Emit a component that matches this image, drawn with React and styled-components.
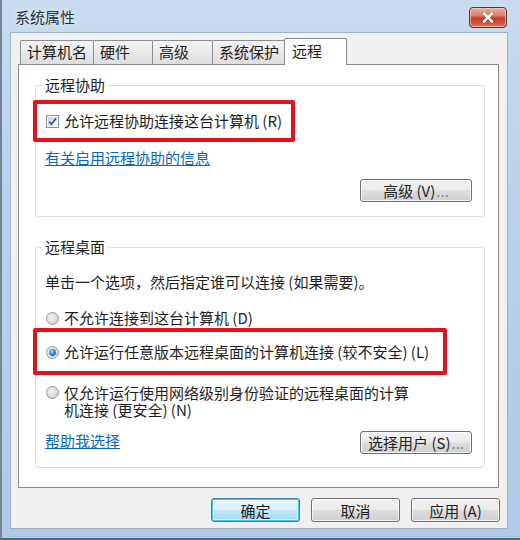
import React from 'react';
import styled, { createGlobalStyle, css } from 'styled-components';

const GlobalStyle = createGlobalStyle`
  html, body {
    margin: 0;
    padding: 0;
  }
  body {
    width: 520px;
    height: 540px;
    overflow: hidden;
    font-family: "Noto Sans CJK SC", "Noto Sans", sans-serif;
    color: #1e1e1e;
  }
`;

const Window = styled.div`
  width: 520px;
  height: 540px;
  box-sizing: border-box;
  display: flex;
  flex-direction: column;
  background: linear-gradient(to bottom, #c9dcef 0%, #bcd3ea 30%, #afc9e6 100%);
  border-left: 2px solid #75848f;
  border-bottom: 2px solid #3f6d7a;
  padding: 0 12px 9px 8px;
`;

const TitleBar = styled.div`
  height: 32px;
  flex-shrink: 0;
  display: flex;
  align-items: center;
  justify-content: space-between;
  padding-left: 5px;
`;

const Title = styled.span`
  font-size: 15px;
  line-height: 20px;
  color: #26323e;
  text-shadow: 0 0 6px rgba(255, 255, 255, 0.9);
  margin-top: 2px;
`;

const CloseButton = styled.div`
  width: 38px;
  height: 21px;
  box-sizing: border-box;
  margin: 3px 1px 0 0;
  border: 1px solid #6b2c24;
  border-radius: 4px;
  background: linear-gradient(to bottom, #eab2a2 0%, #d9806b 40%, #c43f27 52%, #d0533a 80%, #e07a5c 100%);
  box-shadow: inset 0 0 0 1px rgba(255, 220, 210, 0.6);
  display: flex;
  align-items: center;
  justify-content: center;
`;

const Client = styled.div`
  flex: 1;
  display: flex;
  flex-direction: column;
  background: #f0f0f0;
  border: 1px solid #9fb3c6;
  padding: 5px 8px 0 7px;
`;

const TabStrip = styled.div`
  height: 26px;
  display: flex;
  align-items: flex-end;
  padding-left: 2px;
  position: relative;
  z-index: 1;
`;

const Tab = styled.div`
  width: ${(p) => p.w}px;
  height: 24px;
  box-sizing: border-box;
  margin-right: -1px;
  padding-left: 6px;
  border: 1px solid #898c95;
  border-bottom: none;
  border-radius: 2px 2px 0 0;
  background: linear-gradient(to bottom, #f4f4f4 0%, #e9e9e9 50%, #dedede 100%);
  font-size: 15px;
  line-height: 22px;
  white-space: nowrap;

  ${(p) =>
    p.active &&
    css`
      height: 27px;
      margin-bottom: -1px;
      padding-left: 7px;
      background: #ffffff;
      line-height: 24px;
    `};
`;

const Panel = styled.div`
  display: flex;
  flex-direction: column;
  background: #ffffff;
  border: 1px solid #898c95;
  padding: 20px 13px 19px 16px;
`;

const GroupBox = styled.div`
  display: flex;
  flex-direction: column;
  border: 1px solid #d5dfe5;
  border-radius: 3px;
  padding: 0 12px ${(p) => p.bottom}px 9px;
  margin-top: ${(p) => p.top || 0}px;
`;

const Legend = styled.span`
  align-self: flex-start;
  margin: -11px 0 0 -3px;
  padding: 0 3px;
  background: #ffffff;
  font-size: 15px;
  line-height: 20px;
`;

const Highlight = styled.div`
  align-self: flex-start;
  margin: ${(p) => p.top || 0}px 0 0 -12px;
  padding: ${(p) => p.pad};
  border: 4px solid #e5121b;
  border-radius: 2px;
`;

const OptionRow = styled.div`
  display: flex;
  align-items: ${(p) => (p.wrap ? 'flex-start' : 'center')};
  gap: 5px;
  margin-top: ${(p) => p.top || 0}px;
`;

const Indicator = styled.svg`
  flex-shrink: 0;
  margin-left: 1px;
  margin-top: ${(p) => (p.wrap ? 2 : 0)}px;
`;

const Label = styled.span`
  font-size: 15px;
  line-height: ${(p) => (p.wrap ? 17 : 20)}px;
  max-width: ${(p) => (p.wrap ? '352px' : 'none')};
  white-space: ${(p) => (p.wrap ? 'normal' : 'nowrap')};
`;

const Text = styled.div`
  font-size: 15px;
  line-height: 20px;
  margin-top: ${(p) => p.top || 0}px;
`;

const Link = styled.a`
  align-self: flex-start;
  font-size: 15px;
  line-height: 20px;
  color: #0a66c2;
  text-decoration: underline;
  margin-top: ${(p) => p.top || 0}px;
`;

const Footer = styled.div`
  display: flex;
  align-items: center;
  justify-content: space-between;
  margin-top: 13px;
`;

const Button = styled.div`
  width: ${(p) => p.w}px;
  height: ${(p) => p.h}px;
  box-sizing: border-box;
  align-self: flex-end;
  margin-top: ${(p) => p.top || 0}px;
  border: 1px solid #707070;
  border-radius: 3px;
  background: linear-gradient(to bottom, #f3f3f3 0%, #ebebeb 48%, #dddddd 52%, #cfcfcf 100%);
  box-shadow: inset 0 0 0 1px rgba(255, 255, 255, 0.75);
  display: flex;
  align-items: center;
  justify-content: center;
  font-size: 15px;
  white-space: nowrap;

  ${(p) =>
    p.primary &&
    css`
      border-color: #3c7fb1;
      background: linear-gradient(to bottom, #eaf6fd 0%, #d9f0fc 48%, #bee6fd 52%, #a7d9f5 100%);
      box-shadow: inset 0 0 0 1px #48c1f0, inset 0 0 0 2px rgba(255, 255, 255, 0.6);
    `};
`;

const Dots = styled.span`
  color: #8a8a8a;
  margin-left: 1px;
`;

const ButtonRow = styled.div`
  display: flex;
  justify-content: flex-end;
  gap: 11px;
  margin: 10px -1px 0 0;
`;

function CheckBox() {
  return (
    <Indicator width="13" height="13" viewBox="0 0 13 13">
      <defs>
        <linearGradient id="cb" x1="0" y1="0" x2="1" y2="1">
          <stop offset="0" stopColor="#cbd4de" />
          <stop offset="1" stopColor="#f4f6f8" />
        </linearGradient>
      </defs>
      <rect x="0.5" y="0.5" width="12" height="12" fill="#ffffff" stroke="#8f8f8f" />
      <rect x="2" y="2" width="9" height="9" fill="url(#cb)" />
      <path d="M3.2 6.6 L5.4 9.2 L10 3.4" fill="none" stroke="#3a5a9c" strokeWidth="1.8" />
    </Indicator>
  );
}

function Radio({ checked, wrap }) {
  return (
    <Indicator width="13" height="13" viewBox="0 0 13 13" wrap={wrap ? 1 : 0}>
      <defs>
        <radialGradient id="rb" cx="0.4" cy="0.4" r="0.7">
          <stop offset="0" stopColor="#f4f4f4" />
          <stop offset="1" stopColor="#c9c9c9" />
        </radialGradient>
        <radialGradient id="rd" cx="0.4" cy="0.35" r="0.7">
          <stop offset="0" stopColor="#9fe2ff" />
          <stop offset="0.6" stopColor="#2b8bd0" />
          <stop offset="1" stopColor="#1a5c9b" />
        </radialGradient>
      </defs>
      <circle cx="6.5" cy="6.5" r="6" fill="url(#rb)" stroke="#9b9b9b" />
      {checked && <circle cx="6.5" cy="6.5" r="3.4" fill="url(#rd)" />}
    </Indicator>
  );
}

export default function App() {
  return (
    <>
      <GlobalStyle />
      <Window>
        <TitleBar>
          <Title>系统属性</Title>
          <CloseButton>
            <svg width="14" height="11" viewBox="0 0 14 11">
              <path d="M3 1.5 L11 9.5 M11 1.5 L3 9.5" stroke="#5a1b12" strokeWidth="4" strokeLinecap="round" opacity="0.35" />
              <path d="M3 1.5 L11 9.5 M11 1.5 L3 9.5" stroke="#ffffff" strokeWidth="2.6" strokeLinecap="round" />
            </svg>
          </CloseButton>
        </TitleBar>
        <Client>
          <TabStrip>
            <Tab w={74}>计算机名</Tab>
            <Tab w={60}>硬件</Tab>
            <Tab w={61}>高级</Tab>
            <Tab w={73}>系统保护</Tab>
            <Tab w={63} active>
              远程
            </Tab>
          </TabStrip>
          <Panel>
            <GroupBox bottom={14}>
              <Legend>远程协助</Legend>
              <Highlight top={5} pad="7px 9px 7px 8px">
                <OptionRow>
                  <CheckBox />
                  <Label>允许远程协助连接这台计算机 (R)</Label>
                </OptionRow>
              </Highlight>
              <Link top={6}>有关启用远程协助的信息</Link>
              <Button w={112} h={23} top={11}>
                高级 (V)<Dots>...</Dots>
              </Button>
            </GroupBox>
            <GroupBox top={30} bottom={13}>
              <Legend>远程桌面</Legend>
              <Text top={15}>单击一个选项，然后指定谁可以连接 (如果需要)。</Text>
              <OptionRow top={16}>
                <Radio />
                <Label>不允许连接到这台计算机 (D)</Label>
              </OptionRow>
              <Highlight pad="10px 14px 9px 8px">
                <OptionRow>
                  <Radio checked />
                  <Label>允许运行任意版本远程桌面的计算机连接 (较不安全) (L)</Label>
                </OptionRow>
              </Highlight>
              <OptionRow top={9} wrap={1}>
                <Radio wrap />
                <Label wrap={1}>仅允许运行使用网络级别身份验证的远程桌面的计算机连接 (更安全) (N)</Label>
              </OptionRow>
              <Footer>
                <Link>帮助我选择</Link>
                <Button w={112} h={23}>
                  选择用户 (S)<Dots>...</Dots>
                </Button>
              </Footer>
            </GroupBox>
          </Panel>
          <ButtonRow>
            <Button w={89} h={24} primary>
              确定
            </Button>
            <Button w={89} h={24}>
              取消
            </Button>
            <Button w={89} h={24}>
              应用 (A)
            </Button>
          </ButtonRow>
        </Client>
      </Window>
    </>
  );
}
